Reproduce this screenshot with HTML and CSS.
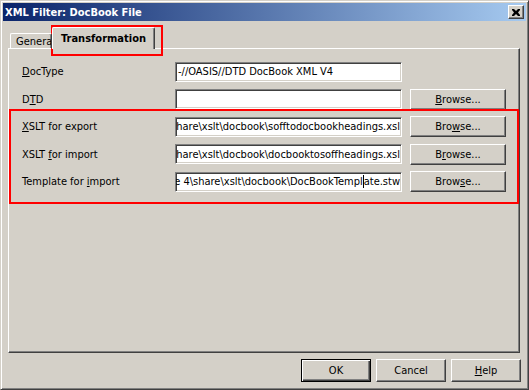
FILE: index.html
```html
<!DOCTYPE html>
<html lang="en">
<head>
    <meta charset="UTF-8">
    <title>XML Filter: DocBook File</title>
    <link rel="stylesheet" href="styles.css">
</head>
<body>
    <div class="window">
        <div class="titlebar">
            <span class="title">XML Filter: DocBook File</span>
            <span class="close-btn">
                <svg width="8" height="7" viewBox="0 0 8 7">
                    <path d="M0 0h2l2 2 2-2h2v1L6 3.5 8 6v1H6L4 5 2 7H0V6l2-2.5L0 1z" fill="#000"/>
                </svg>
            </span>
        </div>

        <div class="dialog-body">
            <div class="tabs">
                <div class="tab">General</div>
                <div class="tab active">Transformation</div>
            </div>

            <div class="panel">
                <div class="row">
                    <span class="label"><u>D</u>ocType</span>
                    <div class="field field-start">-//OASIS//DTD DocBook XML V4</div>
                </div>
                <div class="row">
                    <span class="label">D<u>T</u>D</span>
                    <div class="field"></div>
                    <button class="btn browse"><u>B</u>rowse...</button>
                </div>
                <div class="row">
                    <span class="label"><u>X</u>SLT for export</span>
                    <div class="field"><span>C:\Program Files\LibreOffice 4\share\xslt\docbook\sofftodocbookheadings.xsl</span></div>
                    <button class="btn browse">Bro<u>w</u>se...</button>
                </div>
                <div class="row">
                    <span class="label">XSLT <u>f</u>or import</span>
                    <div class="field"><span>C:\Program Files\LibreOffice 4\share\xslt\docbook\docbooktosoffheadings.xsl</span></div>
                    <button class="btn browse">B<u>r</u>owse...</button>
                </div>
                <div class="row">
                    <span class="label">Template for <u>i</u>mport</span>
                    <div class="field"><span>C:\Program Files\LibreOffice 4\share\xslt\docbook\DocBookTempl<span class="caret"></span>ate.stw</span></div>
                    <button class="btn browse">Brow<u>s</u>e...</button>
                </div>
            </div>

            <div class="actions">
                <button class="btn default">OK</button>
                <button class="btn">Cancel</button>
                <button class="btn"><u>H</u>elp</button>
            </div>
        </div>

        <!-- red annotation boxes drawn over the dialog -->
        <div class="mark mark-tab"></div>
        <div class="mark mark-rows"></div>
    </div>
</body>
</html>
```

FILE: styles.css
```css
body {
    margin: 0;
    background-color: #d4d0c8;
    font-family: 'DejaVu Sans Condensed', 'Liberation Sans', Arial, sans-serif;
    font-size: 11px;
    color: #000;
}
.window {
    position: relative;
    width: 529px;
    height: 390px;
    box-sizing: border-box;
    border: 1px solid;
    border-color: #d4d0c8 #404040 #404040 #d4d0c8;
    box-shadow: inset 1px 1px #fff, inset -1px -1px #808080;
    padding: 2px;
    background-color: #d4d0c8;
    display: flex;
    flex-direction: column;
}

/* title bar */
.titlebar {
    height: 18px;
    flex-shrink: 0;
    background: linear-gradient(to right, #0a246a, #a6caf0);
    display: flex;
    align-items: center;
    justify-content: space-between;
    padding: 0 2px 0 2px;
}
.title {
    color: #fff;
    font-weight: bold;
    font-size: 11px;
}
.close-btn {
    width: 16px;
    height: 14px;
    box-sizing: border-box;
    background-color: #d4d0c8;
    border: 1px solid;
    border-color: #fff #404040 #404040 #fff;
    box-shadow: inset -1px -1px #808080;
    display: flex;
    align-items: center;
    justify-content: center;
}

.dialog-body {
    flex: 1;
    display: flex;
    flex-direction: column;
    padding: 0 6px 0 5px;
}

/* tabs */
.tabs {
    height: 27px;
    display: flex;
    align-items: flex-end;
    padding-left: 2px;
    position: relative;
    z-index: 1;
}
.tab {
    height: 15px;
    box-sizing: border-box;
    border: 1px solid;
    border-bottom: none;
    border-color: #fff #404040 #404040 #fff;
    box-shadow: inset -1px 0 #808080;
    border-radius: 2px 2px 0 0;
    padding: 1px 0 0 5px;
    width: 42px;
    overflow: hidden;
    white-space: nowrap;
}
.tab.active {
    height: 22px;
    margin-bottom: -1px;
    width: 103px;
    padding: 4px 0 0 8px;
    font-weight: bold;
    background-color: #d4d0c8;
}

.panel {
    height: 305px;
    box-sizing: border-box;
    border: 1px solid;
    border-color: #fff #404040 #404040 #fff;
    box-shadow: inset -1px -1px #808080;
    padding: 12px 0 0 13px;
    display: flex;
    flex-direction: column;
    gap: 6.5px;
}
.row {
    height: 21px;
    display: flex;
    align-items: center;
}
.label {
    width: 153px;
    flex-shrink: 0;
}
.field {
    width: 227px;
    height: 20px;
    box-sizing: border-box;
    background-color: #fff;
    border: 1px solid;
    border-color: #808080 #fff #fff #808080;
    box-shadow: inset 1px 1px #404040, inset -1px -1px #d4d0c8;
    padding: 0 1px 0 2px;
    display: flex;
    align-items: center;
    justify-content: flex-end;
    overflow: hidden;
    white-space: nowrap;
}
.field.field-start {
    justify-content: flex-start;
}
.field span {
    flex-shrink: 0;
}
.caret {
    display: inline-block;
    width: 1px;
    height: 13px;
    background-color: #000;
    vertical-align: -3px;
}

/* push buttons */
.btn {
    font-family: inherit;
    font-size: 11px;
    color: #000;
    background-color: #d4d0c8;
    box-sizing: border-box;
    border: 1px solid;
    border-color: #fff #404040 #404040 #fff;
    box-shadow: inset -1px -1px #808080;
    padding: 0;
    margin: 0;
}
.browse {
    width: 96px;
    height: 21px;
    margin-left: 8px;
}
.btn.default {
    border: 1px solid #000;
    box-shadow: inset 1px 1px #fff, inset -1px -1px #404040, inset -2px -2px #808080;
}

.actions {
    display: flex;
    justify-content: flex-end;
    gap: 5px;
    margin-top: 6px;
    margin-right: -1px;
}
.actions .btn {
    width: 70px;
    height: 23px;
}

/* red annotation frames */
.mark {
    position: absolute;
    border: 2px solid #ff0000;
    box-sizing: border-box;
    pointer-events: none;
}
.mark-tab {
    left: 50px;
    top: 24px;
    width: 112px;
    height: 31px;
}
.mark-rows {
    left: 8px;
    top: 108px;
    width: 510px;
    height: 95px;
}
```
